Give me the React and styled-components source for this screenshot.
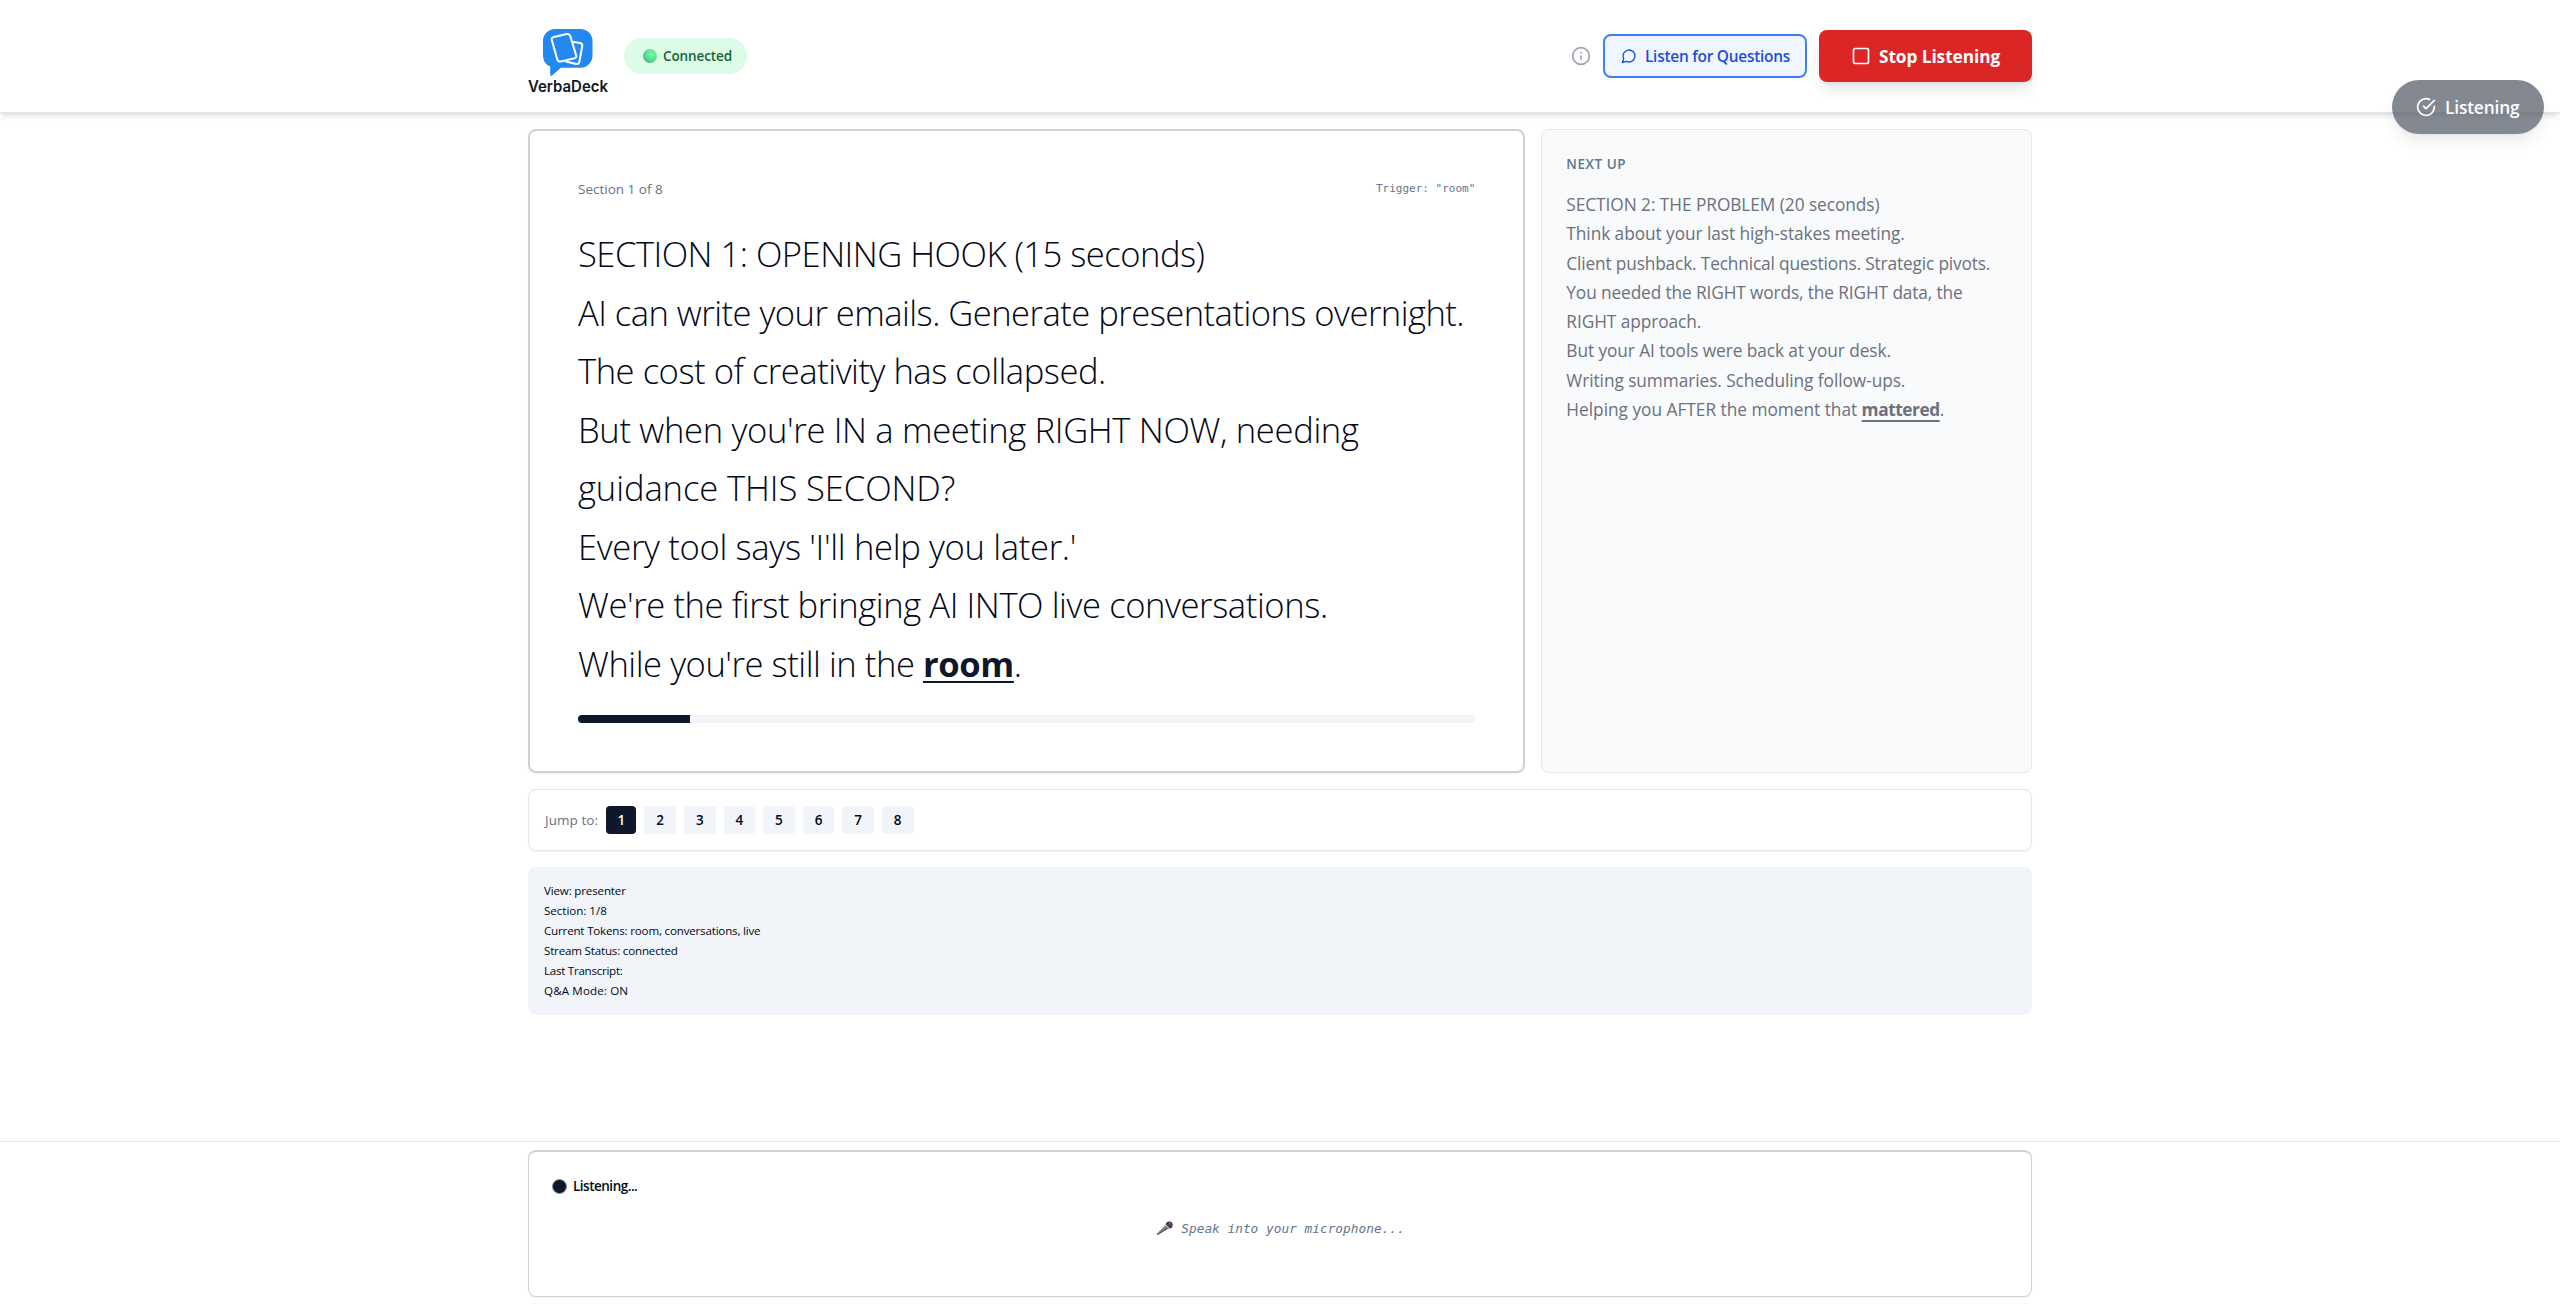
import React from "react";
import styled, { createGlobalStyle, css } from "styled-components";

const GlobalStyle = createGlobalStyle`
  *, *::before, *::after { box-sizing: border-box; }
  body {
    margin: 0;
    background: #fff;
    color: #020817;
    font-family: "Open Sans", "Noto Sans", sans-serif;
  }
  button { font-family: inherit; cursor: pointer; }
`;

const Page = styled.div`
  height: 1305px;
  display: flex;
  flex-direction: column;
  overflow: hidden;
`;

const Container = styled.div`
  width: 100%;
  max-width: 1536px;
  margin: 0 auto;
  padding: 0 16px;
`;

const Header = styled.header`
  position: relative;
  flex: none;
  height: 113px;
  border-bottom: 1px solid #e2e8f0;
  background: #fff;
  box-shadow: 0 4px 6px -1px rgba(0, 0, 0, 0.1), 0 2px 4px -2px rgba(0, 0, 0, 0.1);
`;

const HeaderRow = styled(Container)`
  height: 112px;
  display: flex;
  align-items: center;
  justify-content: space-between;
`;

const Group = styled.div`
  display: flex;
  align-items: center;
  gap: ${(p) => p.$gap}px;
`;

const Label = styled.span`
  letter-spacing: ${(p) => p.$ls || 0}px;
  white-space: pre;
`;

const StatusBadge = styled.div`
  display: flex;
  align-items: center;
  gap: 6px;
  width: 123px;
  height: 36px;
  padding-left: 19px;
  border-radius: 999px;
  background: #dcfce7;
  color: #166534;
  font-size: 13.5px;
  font-weight: 600;
`;

const StatusDot = styled.span`
  width: 14px;
  height: 14px;
  border-radius: 50%;
  background: radial-gradient(circle at 65% 35%, #6dfba3 0%, #5ce695 40%, #4faf86 80%, #56a088 100%);
`;

const InfoWrap = styled.span`
  display: flex;
  color: #9ca3af;
  margin-right: 4px;
`;

const QuestionsButton = styled.button`
  display: flex;
  align-items: center;
  gap: 8px;
  width: 204px;
  height: 44px;
  padding: 0 0 0 16px;
  border: 2px solid #3b82f6;
  border-radius: 8px;
  background: #eff6ff;
  color: #1d4ed8;
  font-size: 15.4px;
  font-weight: 600;
`;

const StopButton = styled.button`
  display: flex;
  align-items: center;
  gap: 8px;
  width: 213px;
  height: 52px;
  padding: 0 0 0 32px;
  border: 0;
  border-radius: 8px;
  background: #dc2626;
  color: #fff;
  font-size: 17.3px;
  font-weight: 700;
  box-shadow: 0 10px 15px -3px rgba(0, 0, 0, 0.1), 0 4px 6px -4px rgba(0, 0, 0, 0.1);
`;

const FloatingPill = styled.div`
  position: absolute;
  z-index: 5;
  top: 80px;
  right: 16px;
  display: flex;
  align-items: center;
  gap: 9px;
  width: 152px;
  height: 54px;
  padding-left: 24px;
  border-radius: 999px;
  background: #494f5b;
  opacity: 0.67;
  color: #fff;
  font-size: 17.3px;
  font-weight: 600;
  box-shadow: 0 10px 15px -3px rgba(0, 0, 0, 0.1), 0 4px 6px -4px rgba(0, 0, 0, 0.1);
`;

const Main = styled(Container)`
  flex: 1;
  padding-top: 16px;
  display: flex;
  flex-direction: column;
  gap: 16px;
`;

const Columns = styled.div`
  display: grid;
  grid-template-columns: 997.33px 490.67px;
  gap: 16px;
  height: 644px;
`;

const CurrentCard = styled.section`
  border: 2px solid #cfd1d4;
  border-radius: 8px;
  padding: 48px;
  box-shadow: 0 1px 2px rgba(0, 0, 0, 0.05);
`;

const CardHead = styled.div`
  display: flex;
  align-items: center;
  justify-content: space-between;
  height: 19px;
  margin-bottom: 27px;
  color: #64748b;
  font-size: 13.5px;
`;

const Trigger = styled.span`
  font: 11px "DejaVu Sans Mono", monospace;
`;

const Script = styled.div`
  font-size: 34.6px;
  font-weight: 300;
  line-height: 58.5px;
`;

const Line = styled.div`
  height: ${(p) => p.$h}px;
  white-space: pre;
  letter-spacing: ${(p) => p.$ls}px;
`;

const Keyword = styled.strong`
  font-weight: 700;
  letter-spacing: ${(p) => p.$ls}px;
  text-decoration: underline;
  text-decoration-thickness: 2px;
  text-underline-offset: 4px;
  ${(p) => p.$strong && css`color: #0f172a;`}
`;

const Track = styled.div`
  height: 8px;
  margin-top: 22px;
  border-radius: 999px;
  overflow: hidden;
  background: #f1f5f9;
`;

const Fill = styled.div`
  height: 100%;
  width: 12.5%;
  background: #0f172a;
`;

const NextCard = styled.section`
  border: 1px solid #e2e8f0;
  border-radius: 8px;
  padding: 24px;
  background: #f8fafc;
`;

const NextTitle = styled.h3`
  margin: 0 0 16px;
  color: #64748b;
  font-size: 13.5px;
  line-height: 20px;
  font-weight: 600;
  letter-spacing: 0.55px;
`;

const NextBody = styled.div`
  color: #6c717c;
  font-size: 17.3px;
  line-height: 29.25px;
`;

const JumpBar = styled.nav`
  display: flex;
  align-items: center;
  gap: 8px;
  height: 62px;
  padding: 0 16px;
  border: 1px solid #e2e8f0;
  border-radius: 8px;
  box-shadow: 0 1px 2px rgba(0, 0, 0, 0.05);
`;

const JumpLabel = styled.span`
  width: 53.2px;
  color: #64748b;
  font-size: 13.5px;
  white-space: nowrap;
  letter-spacing: 0.05px;
`;

const JumpButton = styled.button`
  width: ${(p) => (p.$active ? 30.2 : 31.6)}px;
  height: 28px;
  padding: 0;
  border: 0;
  border-radius: 4px;
  font-size: 13.5px;
  font-weight: 600;
  background: ${(p) => (p.$active ? "#0f172a" : "#f1f5f9")};
  color: ${(p) => (p.$active ? "#f8fafc" : "#020817")};
`;

const DebugPanel = styled.div`
  display: flex;
  flex-direction: column;
  gap: 4px;
  height: 148px;
  padding: 16px;
  border-radius: 8px;
  background: #f1f5f9;
  font-size: 11.6px;
  line-height: 16px;
`;

const Footer = styled.footer`
  flex: none;
  height: 164px;
  padding-top: 8px;
  border-top: 1px solid #e2e8f0;
  background: #fff;
`;

const TranscriptCard = styled.div`
  height: 147px;
  padding: 24px 22.5px;
  border: 1px solid #cfd1d4;
  border-top-width: 2px;
  border-radius: 8px;
  box-shadow: 0 1px 2px rgba(0, 0, 0, 0.05);
`;

const ListenRow = styled.div`
  display: flex;
  align-items: center;
  gap: 6.5px;
  height: 20px;
  font-size: 13.5px;
  font-weight: 600;
`;

const PulseDot = styled.span`
  width: 15px;
  height: 15px;
  border-radius: 50%;
  border: 1.5px solid #8d929c;
  background: #0f172a;
`;

const Prompt = styled.div`
  display: flex;
  align-items: center;
  justify-content: center;
  gap: 8px;
  height: 20px;
  margin-top: 22px;
  padding-left: 1px;
  color: #64748b;
  font: italic 12.8px "DejaVu Sans Mono", monospace;
`;

const LogoSvg = styled.svg`
  display: block;
  width: 80px;
  height: 80px;
  overflow: visible;
`;

const LogoText = styled.text`
  font: 600 16px Inter, sans-serif;
  fill: #111820;
`;

function Logo() {
  return (
    <LogoSvg viewBox="0 0 80 80">
      <path
        d="M27 13H52.5A12 12 0 0 1 64.500 25V39.700A12 12 0 0 1 52.500 51.700H33L24 59.600Q22.200 60.800 22.200 58.500V50.600A12 12 0 0 1 15 39.700V25A12 12 0 0 1 27 13Z"
        fill="#2389f0"
      />
      <g fill="none" stroke="#fff" strokeWidth="2" strokeLinejoin="round" strokeLinecap="round">
        <path d="M44.300 25.800L52 27.100Q54.700 27.700 54.200 30.300L51.400 45.600Q50.800 48.400 48.200 47.900L38 45.600" />
        <path
          d="M26 20.900L38.800 18.100Q41.500 17.500 42.300 20.100L48.100 39.200Q48.800 41.800 46.200 42.400L32.600 45.400Q30 46 29.300 43.400L23.800 24Q23.200 21.500 26 20.900Z"
          fill="#2389f0"
        />
      </g>
      <LogoText x="0" y="75.500" textLength="80" lengthAdjust="spacingAndGlyphs">VerbaDeck</LogoText>
    </LogoSvg>
  );
}

function Icon({ size, children }) {
  return (
    <svg
      width={size}
      height={size}
      viewBox="0 0 24 24"
      fill="none"
      stroke="currentColor"
      strokeWidth="2"
      strokeLinecap="round"
      strokeLinejoin="round"
    >
      {children}
    </svg>
  );
}

function Microphone() {
  return (
    <svg width="17" height="15" viewBox="0 0 17 15">
      <path d="M.4 13L9.800 3.800L12.800 7.200L1.800 14Z" fill="#8b8790" />
      <path d="M1 13.600L11.500 6L12.800 7.200L1.800 14Z" fill="#5f5b66" />
      <circle cx="13.200" cy="4" r="3.500" fill="#46364f" />
      <path d="M9.600 2.800L14 7.400L12.300 8.100L9 4.500Z" fill="#b3afb8" />
      <circle cx="13.800" cy="2.700" r="1.100" fill="#74647e" />
    </svg>
  );
}

const scriptLines = [
  ["SECTION 1: OPENING HOOK (15 seconds)", -0.51],
  ["AI can write your emails. Generate presentations overnight.", -0.535],
  ["The cost of creativity has collapsed.", -0.47],
  ["But when you're IN a meeting RIGHT NOW, needing", -0.335],
  ["guidance THIS SECOND?", -0.1],
  ["Every tool says 'I'll help you later.'", -0.33],
  ["We're the first bringing AI INTO live conversations.", -0.41],
];

const nextLines = [
  ["SECTION 2: THE PROBLEM (20 seconds)", -0.06],
  ["Think about your last high-stakes meeting.", -0.06],
  ["Client pushback. Technical questions. Strategic pivots.", -0.155],
  ["You needed the RIGHT words, the RIGHT data, the", -0.12],
  ["RIGHT approach.", -0.08],
  ["But your AI tools were back at your desk.", -0.08],
  ["Writing summaries. Scheduling follow-ups.", -0.07],
];

const debugLines = [
  ["View: presenter", -0.17],
  ["Section: 1/8", -0.03],
  ["Current Tokens: room, conversations, live", -0.19],
  ["Stream Status: connected", -0.19],
  ["Last Transcript:", -0.27],
  ["Q&A Mode: ON", 0.13],
];

export default function App() {
  return (
    <Page>
      <GlobalStyle />
      <Header>
        <HeaderRow>
          <Group $gap={16}>
            <Logo />
            <StatusBadge>
              <StatusDot />
              <Label $ls={-0.1}>Connected</Label>
            </StatusBadge>
          </Group>
          <Group $gap={12}>
            <Group $gap={8}>
              <InfoWrap>
                <Icon size={20}>
                  <circle cx="12" cy="12" r="10" />
                  <path d="M12 16v-4" />
                  <path d="M12 8h.01" />
                </Icon>
              </InfoWrap>
              <QuestionsButton>
                <Icon size={16}>
                  <path d="M7.9 20A9 9 0 1 0 4 16.1L2 22Z" />
                </Icon>
                <Label $ls={-0.24}>Listen for Questions</Label>
              </QuestionsButton>
            </Group>
            <StopButton>
              <Icon size={20}>
                <rect width="18" height="18" x="3" y="3" rx="2" />
              </Icon>
              <Label $ls={-0.08}>Stop Listening</Label>
            </StopButton>
          </Group>
        </HeaderRow>
      </Header>

      <FloatingPill>
        <Icon size={20}>
          <path d="M22 11.08V12a10 10 0 1 1-5.93-9.14" />
          <path d="m9 11 3 3L22 4" />
        </Icon>
        <Label $ls={-0.15}>Listening</Label>
      </FloatingPill>

      <Main>
        <Columns>
          <CurrentCard>
            <CardHead>
              <span>Section 1 of 8</span>
              <Trigger>Trigger: "room"</Trigger>
            </CardHead>
            <Script>
              {scriptLines.map(([text, ls]) => (
                <Line key={text} $h={58.5} $ls={ls}>{text}</Line>
              ))}
              <Line $h={58.5} $ls={-0.455}>
                {"While you're still in the "}
                <Keyword $strong $ls={-0.4}>room</Keyword>.
              </Line>
            </Script>
            <Track>
              <Fill />
            </Track>
          </CurrentCard>
          <NextCard>
            <NextTitle>NEXT UP</NextTitle>
            <NextBody>
              {nextLines.map(([text, ls]) => (
                <Line key={text} $h={29.25} $ls={ls}>{text}</Line>
              ))}
              <Line $h={29.25} $ls={-0.015}>
                {"Helping you AFTER the moment that "}
                <Keyword $ls={-0.44}>mattered</Keyword>.
              </Line>
            </NextBody>
          </NextCard>
        </Columns>

        <JumpBar>
          <JumpLabel>Jump to:</JumpLabel>
          {[1, 2, 3, 4, 5, 6, 7, 8].map((n) => (
            <JumpButton key={n} $active={n === 1}>{n}</JumpButton>
          ))}
        </JumpBar>

        <DebugPanel>
          {debugLines.map(([text, ls]) => (
            <Label key={text} $ls={ls}>{text}</Label>
          ))}
        </DebugPanel>
      </Main>

      <Footer>
        <Container>
          <TranscriptCard>
            <ListenRow>
              <PulseDot />
              <Label $ls={-0.5}>Listening...</Label>
            </ListenRow>
            <Prompt>
              <Microphone />
              Speak into your microphone...
            </Prompt>
          </TranscriptCard>
        </Container>
      </Footer>
    </Page>
  );
}
